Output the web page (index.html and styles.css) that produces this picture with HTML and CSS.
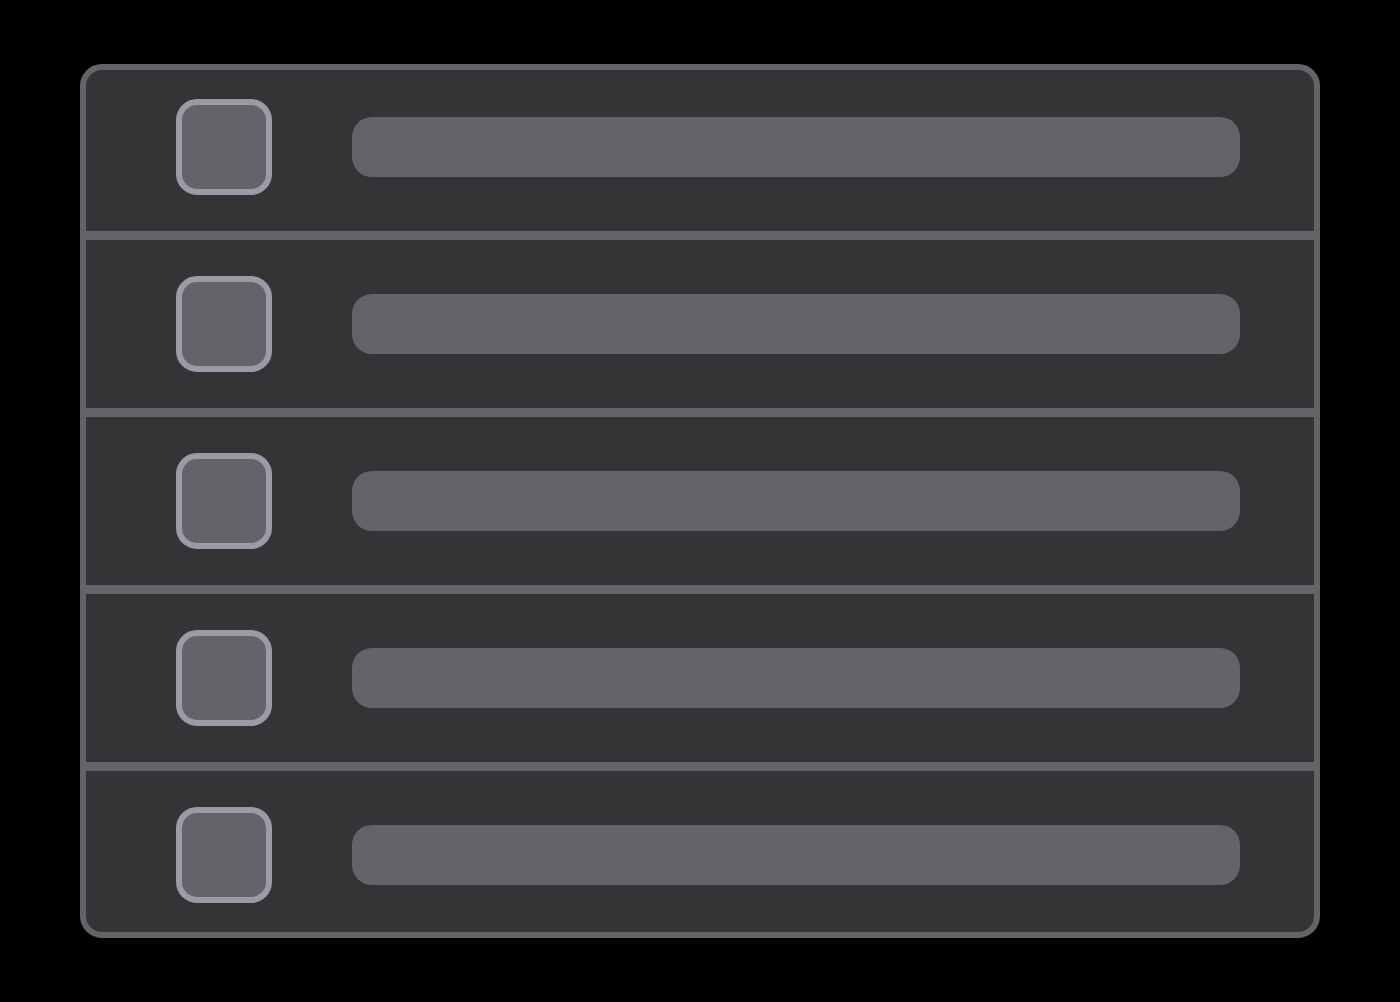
FILE: index.html
```html
<!DOCTYPE html>
<html lang="en">
<head>
<meta charset="utf-8">
<title>List</title>
<link rel="stylesheet" href="styles.css">
</head>
<body>
<div class="card">
  <div class="list">
    <div class="row"><span class="check"></span><span class="bar"></span></div>
    <div class="row"><span class="check"></span><span class="bar"></span></div>
    <div class="row"><span class="check"></span><span class="bar"></span></div>
    <div class="row"><span class="check"></span><span class="bar"></span></div>
    <div class="row"><span class="check"></span><span class="bar"></span></div>
  </div>
</div>
</body>
</html>
```

FILE: styles.css
```css
html, body {
  margin: 0;
  padding: 0;
  background: #000;
  font-family: "Liberation Sans", Arial, sans-serif;
}
body {
  padding: 64px 80px;
  height: 1002px;
  box-sizing: border-box;
}
.card {
  box-sizing: border-box;
  width: 1240px;
  height: 874px;
  border: 6px solid #636368;
  border-radius: 22px;
  background: #343436;
  overflow: hidden;
}
.list {
  display: flex;
  flex-direction: column;
  margin: -7px 0;
}
.row {
  box-sizing: border-box;
  height: 168px;
  display: flex;
  align-items: center;
  padding: 0 74px 0 90px;
  flex-shrink: 0;
}
.row + .row {
  height: 177px;
  border-top: 9px solid #636368;
}
.check {
  box-sizing: border-box;
  width: 96px;
  height: 96px;
  border: 6px solid #9b9ba8;
  border-radius: 21px;
  background: #636469;
  flex-shrink: 0;
}
.bar {
  flex: 1;
  margin-left: 80px;
  height: 60px;
  border-radius: 20px;
  background: #636469;
}
```
